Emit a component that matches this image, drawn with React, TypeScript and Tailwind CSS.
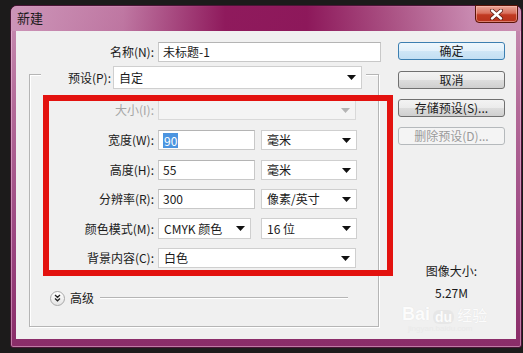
import React from "react";

function Arrow({ disabled }: { disabled?: boolean }) {
  return (
    <svg width="9" height="5" viewBox="0 0 9 5" className="shrink-0">
      <path d="M0 0H9L4.5 5Z" fill={disabled ? "#b4b4b4" : "#111"} />
    </svg>
  );
}

function Select({
  cls,
  text,
  disabled,
}: {
  cls: string;
  text?: React.ReactNode;
  disabled?: boolean;
}) {
  return (
    <div
      className={`${cls} flex items-center justify-between border ${
        disabled ? "border-[#d9d9d9] bg-[#f4f4f4]" : "border-[#cfcfcf] bg-white"
      } pl-[5px] pr-[5px]`}
    >
      <span className="whitespace-nowrap">{text}</span>
      <Arrow disabled={disabled} />
    </div>
  );
}

function Input({ cls, children }: { cls: string; children?: React.ReactNode }) {
  return (
    <div
      className={`${cls} flex items-center border border-[#c8c8c8] border-t-[#b4b4b4] bg-white pl-[4px] whitespace-nowrap`}
    >
      {children}
    </div>
  );
}

function Label({ cls, children, disabled }: { cls: string; children: React.ReactNode; disabled?: boolean }) {
  return (
    <div className={`${cls} shrink-0 text-right whitespace-nowrap ${disabled ? "text-[#a5a5a5]" : "text-[#1a1a1a]"}`}>
      {children}
    </div>
  );
}

function Btn({
  children,
  cls,
  variant,
}: {
  children: React.ReactNode;
  cls: string;
  variant?: "default" | "disabled";
}) {
  const v =
    variant === "default"
      ? "border-[#3c7fb1] bg-[linear-gradient(#eef7fd_0%,#e2f0fa_50%,#cfe6f6_51%,#c2dff3_100%)] text-[#1a1a1a]"
      : variant === "disabled"
      ? "border-[#b5b9bc] bg-[#f4f4f4] text-[#9a9a9a]"
      : "border-[#707070] bg-[linear-gradient(#f3f3f3_0%,#ebebeb_50%,#dddddd_51%,#cfcfcf_100%)] text-[#1a1a1a]";
  return (
    <div className={`${cls} h-[18px] w-[107px] rounded-[3px] border ${v} flex items-center justify-center whitespace-nowrap`}>
      {children}
    </div>
  );
}

export default function App() {
  return (
    <div className="w-[523px] h-[353px] bg-[#1c1b1b] overflow-hidden pt-[5px] pl-[10px] font-['Noto_Sans_CJK_SC',sans-serif] text-[12px] leading-[16px] text-[#1a1a1a]">
      {/* window */}
      <div className="relative w-[512px] h-[343px] rounded-t-[7px] rounded-b-[3px] border border-[#4a1436] bg-[linear-gradient(180deg,#c98fb3_0%,#b36a98_30%,#9a4580_70%,#8a2c68_100%)] flex flex-col shadow-[inset_0_0_0_1px_rgba(255,220,240,0.45)]">
        {/* title bar */}
        <div className="h-[25px] shrink-0 rounded-t-[6px] bg-[linear-gradient(90deg,rgba(205,150,185,0.9)_0%,rgba(185,105,152,0.6)_22%,rgba(140,20,88,0.95)_42%,rgba(138,18,86,0.95)_58%,rgba(160,60,115,0.7)_75%,rgba(200,135,175,0.7)_90%,rgba(205,145,180,0.8)_100%)] flex items-center pl-[6px]">
          <span className="text-[13px] text-[#1a1a1a] leading-[16px] mt-[-1px]">新建</span>
        </div>
        {/* close button */}
        <div className="absolute top-[-1px] right-[3px] w-[43px] h-[18px] rounded-b-[4px] border border-[#5a1408] bg-[linear-gradient(180deg,#e9a597_0%,#d9705d_45%,#c13a22_55%,#b8321c_100%)] flex items-center justify-center shadow-[inset_0_0_0_1px_rgba(255,200,190,0.5)]">
          <svg width="13" height="11" viewBox="0 0 13 11">
            <path d="M2 1.5L11 9.5M11 1.5L2 9.5" stroke="#5a1a10" strokeWidth="4" strokeLinecap="round" />
            <path d="M2 1.5L11 9.5M11 1.5L2 9.5" stroke="#ffffff" strokeWidth="2.4" strokeLinecap="round" />
          </svg>
        </div>

        {/* client */}
        <div className="relative mx-[5px] h-[308px] shrink-0 bg-[#f0f0f0] flex">
          {/* left column */}
          <div className="w-[382px] shrink-0 flex flex-col">
            <div className="mt-[11px] h-[20px] flex items-center">
              <Label cls="w-[138px]">名称(N):</Label>
              <Input cls="ml-[4px] w-[223px] h-[20px]">未标题-1</Input>
            </div>

            {/* group box */}
            <div className="mt-[12px] ml-[13px] w-[350px] h-[253px] border border-[#b5b5b5] shadow-[inset_1px_1px_0_#ffffff,1px_1px_0_#ffffff] flex flex-col">
              <div className="-mt-[9px] ml-[11px] w-[325px] h-[23px] bg-[#f0f0f0] flex items-center">
                <Label cls="w-[70px]">预设(P):</Label>
                <Select cls="ml-[2px] w-[249px] h-[23px]" text="自定" />
              </div>

              <div className="mt-[11px] h-[20px] flex items-center">
                <Label cls="w-[124px]" disabled>
                  大小(I):
                </Label>
                <Select cls="ml-[4px] w-[198px] h-[20px]" disabled />
              </div>

              <div className="mt-[10px] h-[20px] flex items-center">
                <Label cls="w-[124px]">宽度(W):</Label>
                <Input cls="ml-[4px] w-[97px] h-[20px]">
                  <span className="bg-[#4b94e0] text-white px-[1px] leading-[15px]">90</span>
                </Input>
                <Select cls="ml-[6px] w-[96px] h-[20px]" text="毫米" />
              </div>

              <div className="mt-[10px] h-[20px] flex items-center">
                <Label cls="w-[124px]">高度(H):</Label>
                <Input cls="ml-[4px] w-[97px] h-[20px]">55</Input>
                <Select cls="ml-[6px] w-[96px] h-[20px]" text="毫米" />
              </div>

              <div className="mt-[9px] h-[20px] flex items-center">
                <Label cls="w-[124px]">分辨率(R):</Label>
                <Input cls="ml-[4px] w-[97px] h-[20px]">300</Input>
                <Select cls="ml-[6px] w-[96px] h-[20px]" text="像素/英寸" />
              </div>

              <div className="mt-[9px] h-[21px] flex items-center">
                <Label cls="w-[124px]">颜色模式(M):</Label>
                <Select cls="ml-[4px] w-[93px] h-[21px]" text="CMYK 颜色" />
                <Select cls="ml-[10px] w-[96px] h-[21px]" text="16 位" />
              </div>

              <div className="mt-[9px] h-[20px] flex items-center">
                <Label cls="w-[124px]">背景内容(C):</Label>
                <Select cls="ml-[4px] w-[198px] h-[20px]" text="白色" />
              </div>

              <div className="mt-[22px] h-[16px] flex items-center pl-[20px] pr-[30px]">
                <div className="w-[15px] h-[15px] rounded-full border border-[#a8a8a8] bg-[linear-gradient(#ffffff,#e4e4e4)] flex items-center justify-center shrink-0">
                  <svg width="7" height="8" viewBox="0 0 7 8">
                    <path d="M1 1L3.5 3.3L6 1M1 4.5L3.5 6.8L6 4.5" stroke="#222" strokeWidth="1.3" fill="none" />
                  </svg>
                </div>
                <span className="ml-[5px] whitespace-nowrap">高级</span>
                <div className="ml-[6px] flex-1 h-[2px] border-t border-[#b5b5b5] border-b border-b-white" />
              </div>
            </div>
          </div>

          {/* right column */}
          <div className="w-[107px] shrink-0 flex flex-col items-center">
            <Btn cls="mt-[11px]" variant="default">
              确定
            </Btn>
            <Btn cls="mt-[11px]">取消</Btn>
            <Btn cls="mt-[10px]">存储预设(S)...</Btn>
            <Btn cls="mt-[10px]" variant="disabled">
              删除预设(D)...
            </Btn>
            <div className="mt-[118px] whitespace-nowrap">图像大小:</div>
            <div className="mt-[6px] whitespace-nowrap">5.27M</div>
          </div>

          {/* red annotation box */}
          <div className="absolute left-[27px] top-[64px] w-[350px] h-[181px] border-[6px] border-[#e3120f]" />

          {/* watermark */}
          <div className="absolute left-[386px] top-[274px] flex flex-col items-start opacity-80">
            <div className="flex items-end text-white [text-shadow:0_0_1px_#dcdcdc] font-['Liberation_Sans',sans-serif] font-bold text-[18px] leading-[19px]">
              <span>Bai</span>
              <span className="ml-[3px] rounded-[6px] bg-[#e6e6e6] px-[2px] text-[14px] leading-[14px] text-white">du</span>
              <span className="ml-[3px] text-[15px] font-['Noto_Sans_CJK_SC',sans-serif] font-normal">经验</span>
            </div>
            <div className="ml-[6px] text-[8px] leading-[9px] text-[#e9e9e9] font-['Liberation_Sans',sans-serif]">jingyan.baidu.com</div>
          </div>
        </div>
      </div>
    </div>
  );
}
